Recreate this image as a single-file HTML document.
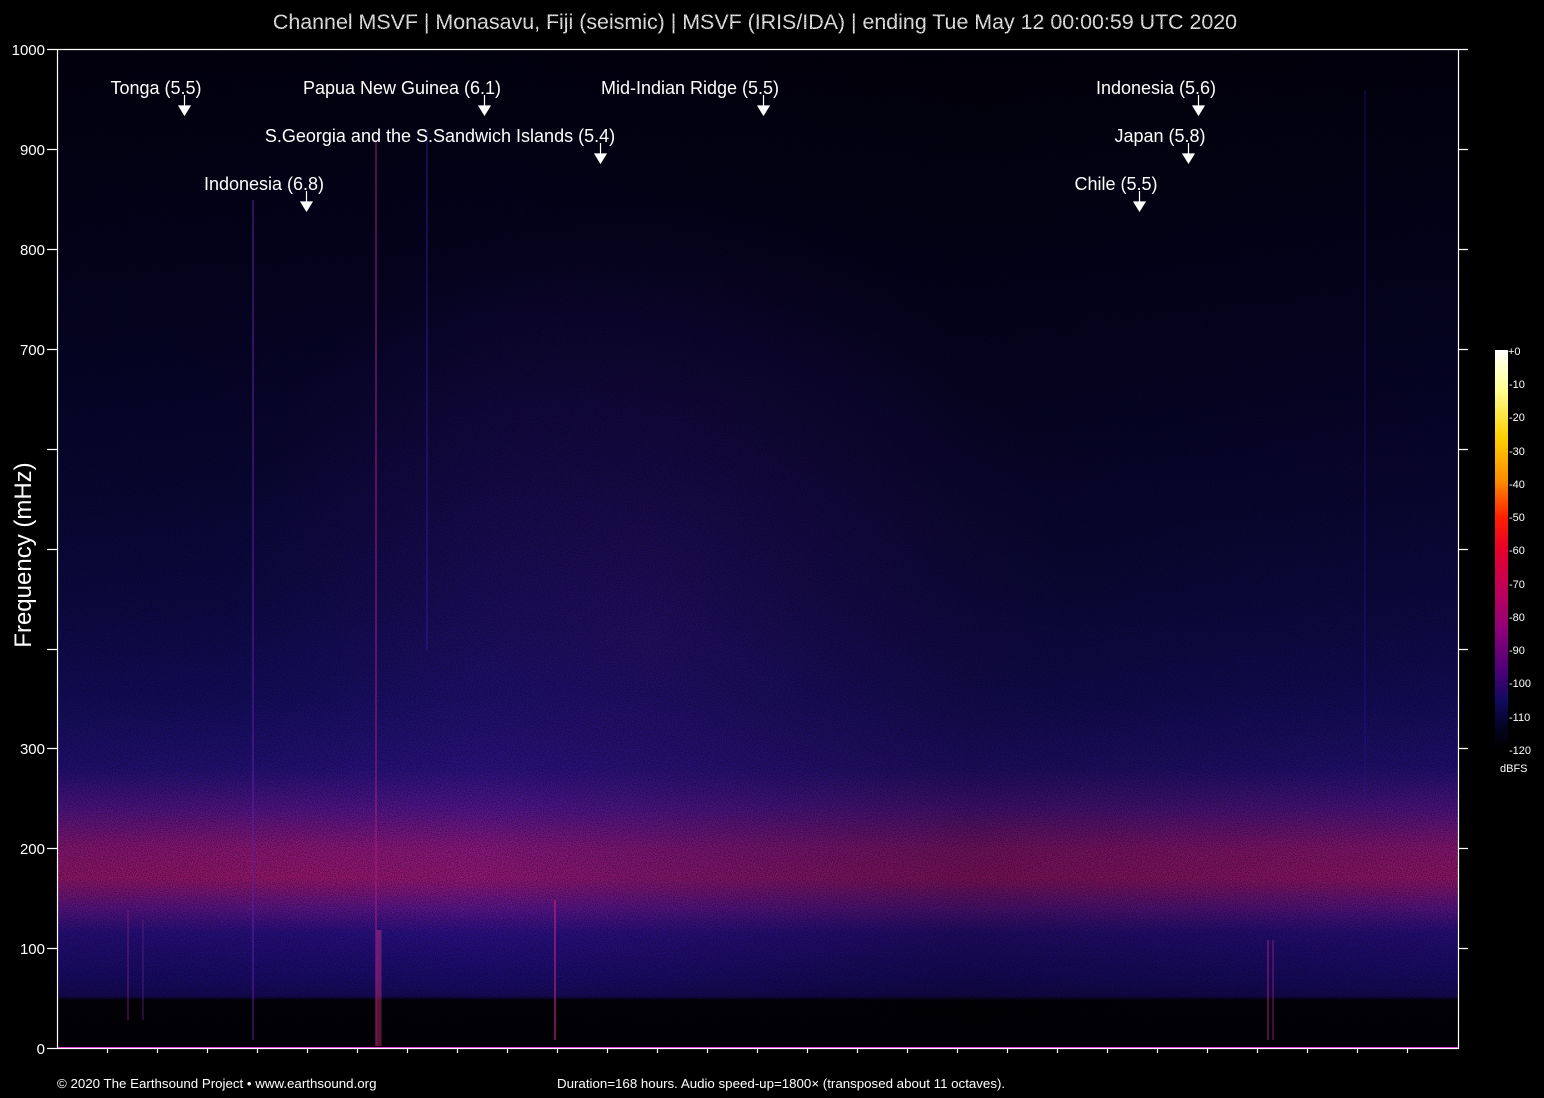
<!DOCTYPE html>
<html><head><meta charset="utf-8"><style>
html,body{margin:0;padding:0;background:#000;width:1544px;height:1098px;overflow:hidden}
svg{display:block}
text{font-family:"Liberation Sans",sans-serif;fill:#fff}
</style></head><body>
<svg width="1544" height="1098" viewBox="0 0 1544 1098">
<defs>
<linearGradient id="vg" x1="0" y1="49" x2="0" y2="1048" gradientUnits="userSpaceOnUse">
<stop offset="0" stop-color="#020110"/>
<stop offset="0.2" stop-color="#050320"/>
<stop offset="0.4" stop-color="#0a0636"/>
<stop offset="0.55" stop-color="#0f0a4c"/>
<stop offset="0.65" stop-color="#160e66"/>
<stop offset="0.72" stop-color="#261280"/>
<stop offset="0.76" stop-color="#561690"/>
<stop offset="0.80" stop-color="#96187e"/>
<stop offset="0.83" stop-color="#a01874"/>
<stop offset="0.86" stop-color="#601690"/>
<stop offset="0.885" stop-color="#2a1088"/>
<stop offset="0.93" stop-color="#1a0c70"/>
<stop offset="0.948" stop-color="#170a5e"/>
<stop offset="0.952" stop-color="#030208"/>
<stop offset="1" stop-color="#020106"/>
</linearGradient>
<radialGradient id="rg" cx="650" cy="620" r="420" gradientUnits="userSpaceOnUse">
<stop offset="0" stop-color="#4a1aa0" stop-opacity="0.35"/>
<stop offset="1" stop-color="#4a1aa0" stop-opacity="0"/>
</radialGradient>
<linearGradient id="hg" x1="58" y1="0" x2="1458" y2="0" gradientUnits="userSpaceOnUse">
<stop offset="0" stop-color="#000" stop-opacity="0.1"/>
<stop offset="0.3" stop-color="#000" stop-opacity="0"/>
<stop offset="0.65" stop-color="#000" stop-opacity="0.25"/>
<stop offset="1" stop-color="#000" stop-opacity="0.1"/>
</linearGradient>
<linearGradient id="cb" x1="0" y1="350" x2="0" y2="748" gradientUnits="userSpaceOnUse">
<stop offset="0" stop-color="#ffffff"/>
<stop offset="0.1" stop-color="#ffff90"/>
<stop offset="0.22" stop-color="#ffd000"/>
<stop offset="0.33" stop-color="#ff8a00"/>
<stop offset="0.42" stop-color="#ff2000"/>
<stop offset="0.5" stop-color="#e8002a"/>
<stop offset="0.6" stop-color="#c0005a"/>
<stop offset="0.7" stop-color="#900078"/>
<stop offset="0.8" stop-color="#50007a"/>
<stop offset="0.88" stop-color="#120a60"/>
<stop offset="0.95" stop-color="#040320"/>
<stop offset="1" stop-color="#000000"/>
</linearGradient>
<filter id="nz"><feTurbulence type="fractalNoise" baseFrequency="1.2" numOctaves="1" seed="3"/><feColorMatrix values="0 0 0 0 0  0 0 0 0 0  0 0 0 0 0  0 0 0 -2.2 1.3"/></filter>
</defs>
<text x="755" y="29" font-size="21.4" text-anchor="middle">Channel MSVF | Monasavu, Fiji (seismic) | MSVF (IRIS/IDA) | ending Tue May 12 00:00:59 UTC 2020</text>
<rect x="58" y="49" width="1400" height="999" fill="url(#vg)"/>
<rect x="58" y="49" width="1400" height="950" fill="url(#rg)"/>
<rect x="58" y="49" width="1400" height="999" fill="url(#hg)"/>
<rect x="58" y="49" width="1400" height="999" filter="url(#nz)" opacity="0.75"/>
<g stroke-width="2">
<line x1="376" y1="140" x2="376" y2="1046" stroke="#a02080" stroke-opacity="0.5"/>
<line x1="379" y1="930" x2="379" y2="1046" stroke="#ff3a90" stroke-width="5" stroke-opacity="0.35"/>
<line x1="253" y1="200" x2="253" y2="1040" stroke="#5a20a0" stroke-opacity="0.5"/>
<line x1="555" y1="900" x2="555" y2="1040" stroke="#c02080" stroke-opacity="0.6"/>
<line x1="427" y1="130" x2="427" y2="650" stroke="#3020a0" stroke-opacity="0.4"/>
<line x1="128" y1="910" x2="128" y2="1020" stroke="#802080" stroke-opacity="0.4"/>
<line x1="143" y1="920" x2="143" y2="1020" stroke="#602080" stroke-opacity="0.4"/>
<line x1="1268" y1="940" x2="1268" y2="1040" stroke="#a02080" stroke-opacity="0.5"/>
<line x1="1273" y1="940" x2="1273" y2="1040" stroke="#a02080" stroke-opacity="0.4"/>
<line x1="1365" y1="90" x2="1365" y2="800" stroke="#2a1890" stroke-opacity="0.3"/>
</g>
<line x1="58" y1="1047.5" x2="1458" y2="1047.5" stroke="#e030d0" stroke-width="1"/>
<g stroke="#fff" stroke-width="1.2" fill="none">
<polyline points="1468,49.5 57.5,49.5 57.5,1048.5 1458.5,1048.5 1458.5,49.5"/>
<path d="M47 49.5h10M47 149.5h10M47 249.5h10M47 349.5h10M47 449.5h10M47 549.5h10M47 649.5h10M47 748.5h10M47 848.5h10M47 948.5h10M47 1048.5h10"/>
<path d="M1458 149.5h10M1458 249.5h10M1458 349.5h10M1458 449.5h10M1458 549.5h10M1458 649.5h10M1458 748.5h10M1458 848.5h10M1458 948.5h10"/>
<path d="M107.5 1048v5M157.5 1048v5M207.5 1048v5M257.5 1048v5M307.5 1048v5M357.5 1048v5M407.5 1048v5M457.5 1048v5M507.5 1048v5M557.5 1048v5M607.5 1048v5M657.5 1048v5M707.5 1048v5M757.5 1048v5M807.5 1048v5M857.5 1048v5M907.5 1048v5M957.5 1048v5M1007.5 1048v5M1057.5 1048v5M1107.5 1048v5M1157.5 1048v5M1207.5 1048v5M1257.5 1048v5M1307.5 1048v5M1357.5 1048v5M1407.5 1048v5"/>
</g>
<g font-size="15" text-anchor="end">
<text x="45" y="55">1000</text><text x="45" y="155">900</text><text x="45" y="255">800</text><text x="45" y="355">700</text>
<text x="45" y="754">300</text><text x="45" y="854">200</text><text x="45" y="954">100</text><text x="45" y="1054">0</text>
</g>
<text transform="translate(31,555) rotate(-90)" font-size="24" text-anchor="middle">Frequency (mHz)</text>
<g font-size="18" text-anchor="middle">
<text x="156" y="94">Tonga (5.5)</text>
<text x="402" y="94">Papua New Guinea (6.1)</text>
<text x="690" y="94">Mid-Indian Ridge (5.5)</text>
<text x="1156" y="94">Indonesia (5.6)</text>
<text x="440" y="142">S.Georgia and the S.Sandwich Islands (5.4)</text>
<text x="1160" y="142">Japan (5.8)</text>
<text x="264" y="190">Indonesia (6.8)</text>
<text x="1116" y="190">Chile (5.5)</text>
</g>
<g stroke="#fff" stroke-width="1.2" fill="#fff">
<path d="M184.5 95v11"/><path d="M179 106h11l-5.5 9z"/>
<path d="M484.5 95v11"/><path d="M479 106h11l-5.5 9z"/>
<path d="M763.5 95v11"/><path d="M758 106h11l-5.5 9z"/>
<path d="M1198.5 95v11"/><path d="M1193 106h11l-5.5 9z"/>
<path d="M600.5 143v11"/><path d="M595 154h11l-5.5 9z"/>
<path d="M1188.5 143v11"/><path d="M1183 154h11l-5.5 9z"/>
<path d="M306.5 191v11"/><path d="M301 202h11l-5.5 9z"/>
<path d="M1139.5 191v11"/><path d="M1134 202h11l-5.5 9z"/>
</g>
<rect x="1495" y="350" width="13" height="398" fill="url(#cb)"/>
<g font-size="11" fill="#ddd">
<text x="1508" y="355">+0</text><text x="1509" y="388">-10</text><text x="1509" y="421">-20</text><text x="1509" y="455">-30</text>
<text x="1509" y="488">-40</text><text x="1509" y="521">-50</text><text x="1509" y="554">-60</text><text x="1509" y="588">-70</text>
<text x="1509" y="621">-80</text><text x="1509" y="654">-90</text><text x="1509" y="687">-100</text><text x="1509" y="721">-110</text>
<text x="1509" y="754">-120</text><text x="1500" y="772">dBFS</text>
</g>
<text x="57" y="1088" font-size="13.3">© 2020 The Earthsound Project • www.earthsound.org</text>
<text x="557" y="1088" font-size="13.3">Duration=168 hours. Audio speed-up=1800× (transposed about 11 octaves).</text>
</svg>
</body></html>
